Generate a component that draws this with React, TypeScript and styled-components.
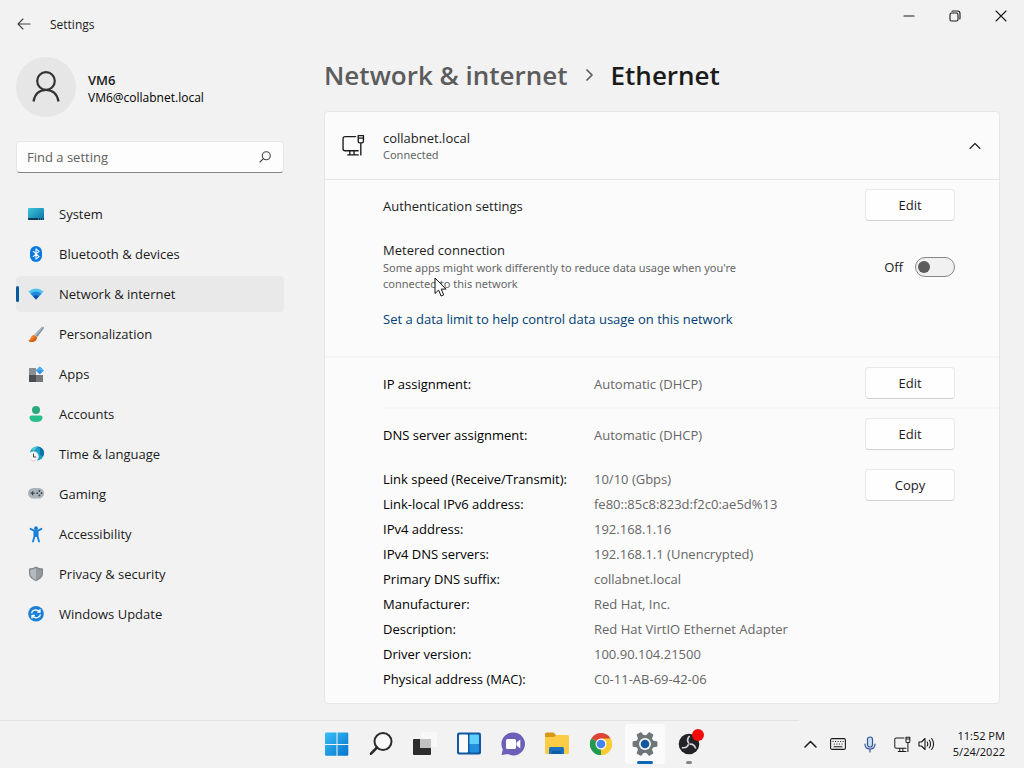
import React from "react";
import styled, { createGlobalStyle } from "styled-components";

const GlobalStyle = createGlobalStyle`
  *, *::before, *::after { box-sizing: border-box; }
  body {
    margin: 0;
    background: #f2f2f2;
    color: #1b1b1b;
    font-family: "Open Sans", "Noto Sans", sans-serif;
    font-size: 13px;
    line-height: 18px;
  }
  button, input { font: inherit; color: inherit; }
  button { padding: 0; border: 0; background: none; }
  svg { display: block; flex: none; }
`;

const Desktop = styled.div`
  display: flex;
  flex-direction: column;
  min-height: 100vh;
`;

const SettingsWindow = styled.div`
  flex: 1;
`;

const TitleBar = styled.header`
  display: flex;
  align-items: flex-start;
  height: 48px;
  padding-left: 4px;
`;

const BackButton = styled.button`
  display: grid;
  place-items: center;
  width: 40px;
  height: 48px;
`;

const WindowTitle = styled.span`
  flex: 1;
  padding-left: 6px;
  font-size: 12px;
  line-height: 50px;
`;

const CaptionButton = styled.button`
  display: grid;
  place-items: center;
  width: 46px;
  height: 32px;
`;

const Layout = styled.div`
  display: grid;
  grid-template-columns: 268px minmax(0, 1fr);
  gap: 40px;
  padding: 0 24px 16px 16px;
`;

const Sidebar = styled.aside`
  padding-top: 9px;
`;

const Profile = styled.div`
  display: flex;
  align-items: center;
  gap: 12px;
  margin-bottom: 24px;
`;

const Avatar = styled.div`
  display: grid;
  place-items: center;
  width: 60px;
  height: 60px;
  border-radius: 50%;
  background: #e6e6e6;
`;

const UserText = styled.div`
  padding-top: 4px;
`;

const UserName = styled.div`
  font-weight: 600;
`;

const UserMail = styled.div`
  font-size: 12px;
  color: #000;
`;

const SearchBox = styled.div`
  display: flex;
  align-items: center;
  height: 32px;
  padding: 0 12px 0 10px;
  border: 1px solid #e6e6e6;
  border-bottom-color: #868686;
  border-radius: 4px;
  background: #fdfdfd;
`;

const SearchInput = styled.input`
  flex: 1;
  min-width: 0;
  padding: 0;
  border: 0;
  outline: 0;
  background: none;
  &::placeholder { color: #606060; opacity: 1; }
`;

const Nav = styled.nav`
  display: flex;
  flex-direction: column;
  gap: 4px;
  margin-top: 23px;
`;

const NavLink = styled.a<{ $active?: boolean }>`
  display: flex;
  align-items: center;
  gap: 15px;
  height: 36px;
  padding-left: 8px;
  border-radius: 4px;
  color: inherit;
  text-decoration: none;
  background: ${(p) => (p.$active ? "#e9e9e9" : "transparent")};
  &::before {
    content: "";
    width: 3px;
    height: 16px;
    margin: 0 -6px 0 -8px;
    border-radius: 2px;
    background: ${(p) => (p.$active ? "#005a9e" : "transparent")};
  }
`;

const Main = styled.main`
  min-width: 0;
  padding-top: 8px;
`;

const Breadcrumb = styled.h1`
  display: flex;
  align-items: center;
  gap: 17px;
  margin: 0 0 17px;
  font-size: 26px;
  font-weight: 600;
  line-height: 38px;
`;

const ParentLink = styled.a`
  color: #5c5c5c;
  text-decoration: none;
`;

const Card = styled.section`
  border: 1px solid #e7e7e7;
  border-radius: 4px;
  background: #fbfbfb;
`;

const CardHeader = styled.button`
  display: flex;
  align-items: center;
  width: 100%;
  height: 68px;
  padding: 0 18px 0 17px;
  border-bottom: 1px solid #e5e5e5;
  text-align: left;
`;

const HeaderText = styled.span`
  display: flex;
  flex: 1;
  flex-direction: column;
  padding-left: 18px;
`;

const Caption = styled.span`
  font-family: "Noto Sans", "Open Sans", sans-serif;
  font-size: 11px;
  line-height: 16px;
  color: #666;
`;

const Group = styled.div`
  padding: 0 44px 0 58px;
`;

const Row = styled.div`
  display: flex;
  align-items: center;
  min-height: 49px;
`;

const MeteredRow = styled.div`
  position: relative;
  display: flex;
  align-items: center;
  justify-content: space-between;
  padding: 12px 0 18px;
`;

const MeteredText = styled.div`
  display: flex;
  flex-direction: column;
  gap: 1px;
  max-width: 400px;
`;

const Grow = styled.span`
  flex: 1;
  padding-top: 2px;
`;

const RowLabel = styled.span`
  width: 211px;
  padding-top: 2px;
  color: #000;
`;

const RowValue = styled.span`
  flex: 1;
  padding-top: 2px;
  color: #666;
`;

const ActionButton = styled.button`
  width: 90px;
  height: 32px;
  border: 1px solid #e8e8e8;
  border-bottom-color: #cfcfcf;
  border-radius: 4px;
  background: #fefefe;
`;

const SwitchLabel = styled.label`
  display: flex;
  align-items: center;
  gap: 12px;
`;

const Switch = styled.input`
  appearance: none;
  display: flex;
  align-items: center;
  width: 40px;
  height: 20px;
  margin: 0;
  padding: 0 2px;
  border: 1px solid #868686;
  border-radius: 10px;
  background: #f1f1f1;
  &::before {
    content: "";
    width: 12px;
    height: 12px;
    border-radius: 50%;
    background: #5c5c5c;
  }
  &:checked { justify-content: flex-end; background: #005a9e; }
  &:checked::before { background: #fff; }
`;

const DataLimitLink = styled.a`
  display: block;
  padding-bottom: 28px;
  color: #003e73;
  text-decoration: none;
`;

const Divider = styled.hr<{ $inset?: boolean }>`
  height: 2px;
  margin: 0 0 0 ${(p) => (p.$inset ? "58px" : "0")};
  border: 0;
  background: #f6f6f6;
`;

const Details = styled.div`
  display: flex;
  align-items: flex-start;
  justify-content: space-between;
  padding: 8px 0 12px;
`;

const DetailTable = styled.table`
  border-collapse: collapse;
  th, td {
    height: 25px;
    padding: 0;
    text-align: left;
    font-weight: 400;
  }
  th { width: 211px; color: #000; }
  td { color: #666; }
`;

const CopySlot = styled.div`
  padding-top: 3px;
`;

const Pointer = styled.svg`
  position: absolute;
  left: 51px;
  top: 48px;
`;

const Taskbar = styled.footer`
  display: grid;
  grid-template-columns: 1fr auto 1fr;
  height: 48px;
  background: linear-gradient(90deg, #e2e2e2 78%, #f2f2f2 78%) top / 100% 1px no-repeat #f2f2f2;
`;

const Apps = styled.div`
  display: flex;
  grid-column: 2;
  align-items: center;
  padding-left: 2px;
`;

const AppButton = styled.button<{ $active?: boolean; $running?: boolean }>`
  position: relative;
  display: grid;
  place-items: center;
  width: 40px;
  height: 40px;
  margin: 0 2px;
  border-radius: 4px;
  background: ${(p) => (p.$active ? "#fbfbfb" : "transparent")};
  &::after {
    content: "";
    position: absolute;
    bottom: 0;
    width: ${(p) => (p.$active ? "16px" : "6px")};
    height: 3px;
    border-radius: 2px;
    background: ${(p) => (p.$active ? "#0f66b4" : p.$running ? "#868686" : "transparent")};
  }
`;

const Tray = styled.div`
  display: flex;
  align-items: center;
  justify-content: flex-end;
  padding-right: 19px;
`;

const TrayButton = styled.button<{ $width: number }>`
  display: grid;
  place-items: center;
  width: ${(p) => p.$width}px;
  height: 40px;
`;

const Clock = styled.button`
  width: 71px;
  font-family: "Noto Sans", "Open Sans", sans-serif;
  font-size: 11px;
  line-height: 16px;
  text-align: right;
  white-space: nowrap;
`;

const line = { fill: "none", stroke: "#1b1b1b", strokeLinecap: "round", strokeLinejoin: "round" } as const;

const EthernetIcon = ({ size }: { size: number }) => (
  <svg width={size} height={size} viewBox="0 0 22 22" {...line} strokeWidth="1.3">
    <path d="M13 2.500H3Q1 2.500 1 4.500V14q0 2 2 2h12.500M7.500 16v4M11.500 16v4M5.500 20h10" />
    <path d="M15.500 1.500h5v5.500q0 1.500-1.500 1.500h-2q-1.500 0-1.500-1.500zM15.500 4h5M18 8.500V20" />
  </svg>
);

const Chevron = ({ d, w, h, width = 1.1, color = "#1b1b1b" }: { d: string; w: number; h: number; width?: number; color?: string }) => (
  <svg width={w} height={h} viewBox={`0 0 ${w} ${h}`} {...line} stroke={color} strokeWidth={width}>
    <path d={d} />
  </svg>
);

const NavSvg = ({ children }: { children: React.ReactNode }) => (
  <svg width="16" height="17" viewBox="0 0 16 17">{children}</svg>
);

const navItems: { label: string; icon: React.ReactNode; active?: boolean }[] = [
  {
    label: "System",
    icon: (
      <NavSvg>
        <defs><linearGradient id="sys" x1="0" y1="0" x2="1" y2="1"><stop stopColor="#3cc9d8" /><stop offset="1" stopColor="#0b6fa8" /></linearGradient></defs>
        <rect y="2" width="16" height="12" rx="1" fill="url(#sys)" />
        <path d="M0 12h16v1q0 1-1 1H1q-1 0-1-1z" fill="#0a3c5c" />
        <path d="M10 13h1M12 13h1M14 13h1" stroke="#6fc8ee" strokeWidth=".8" />
      </NavSvg>
    ),
  },
  {
    label: "Bluetooth & devices",
    icon: (
      <NavSvg>
        <rect x="2" y="0" width="12" height="16" rx="6" fill="#0a78e0" />
        <path d="M5 5.200l6 5.400L8 13.200V2.800l3 2.600-6 5.400" fill="none" stroke="#fff" strokeWidth="1.100" strokeLinejoin="round" />
      </NavSvg>
    ),
  },
  {
    label: "Network & internet",
    active: true,
    icon: (
      <NavSvg>
        <path d="M.4 5.600Q8-.8 15.600 5.600L8 13.600z" fill="#4cc3f1" />
        <path d="M2.600 7.800Q8 3.200 13.400 7.800L8 13.600z" fill="#1e88dc" />
        <path d="M5.200 10.600Q8 8 10.800 10.600L8 13.600z" fill="#0c4fa3" />
      </NavSvg>
    ),
  },
  {
    label: "Personalization",
    icon: (
      <NavSvg>
        <path d="M15.600 1q.6.8 0 1.800L9.400 11 6.600 8.400 13.600 1.200q1-.8 2-.2z" fill="#7d929e" />
        <path d="M13.600 1.200q1-.8 2-.2L8 9.700 6.600 8.400z" fill="#a9bcc6" />
        <path d="M6.400 8.800L9 11.200Q8.600 15.600 4 16 1.600 16.100.4 14.800 2 14.200 2.600 12q.8-2.800 3.800-3.200z" fill="#ec7f26" />
        <path d="M4 16Q1.600 16.100.4 14.800 4.600 14.600 7.600 10l1.400 1.200Q8.600 15.600 4 16z" fill="#d4601a" />
      </NavSvg>
    ),
  },
  {
    label: "Apps",
    icon: (
      <NavSvg>
        <rect x="1" y="2" width="7" height="7" fill="#8b8f92" />
        <rect x="1" y="9" width="7" height="7" fill="#4c4f52" />
        <rect x="8" y="9" width="7" height="7" fill="#73777a" />
        <path d="M11.800.6l4 4-4 4-4-4z" fill="#2f94e6" />
        <path d="M11.800.6l4 4h-8z" fill="#52b0f2" />
      </NavSvg>
    ),
  },
  {
    label: "Accounts",
    icon: (
      <NavSvg>
        <circle cx="8" cy="4" r="4" fill="#2aa87e" />
        <path d="M4 9.400h8q2.600 0 2.600 2.400-.6 4.200-6.600 4.200t-6.600-4.200q0-2.400 2.600-2.400z" fill="#25bf8d" />
      </NavSvg>
    ),
  },
  {
    label: "Time & language",
    icon: (
      <NavSvg>
        <circle cx="9" cy="7.500" r="7" fill="#1e9fc0" />
        <path d="M9 .5q4 1.500 3 5t3 5q2-4 0-7T9 .5z" fill="#0c6fae" />
        <path d="M4 3q2-2.400 5-2.500-1 3-4 4.500z" fill="#58d0d3" />
        <circle cx="5.500" cy="10.500" r="5.200" fill="#f4f1f2" />
        <path d="M5.500 7.600V11h2.600" stroke="#444" strokeWidth="1" fill="none" />
        <path d="M1.800 13q3.600 3 7.400 0-1.400 2.700-3.700 2.700T1.800 13z" fill="#ecc9cb" />
      </NavSvg>
    ),
  },
  {
    label: "Gaming",
    icon: (
      <NavSvg>
        <rect y="2" width="16" height="10.500" rx="5.200" fill="#aab3ba" />
        <path d="M2.600 7.200h4M4.600 5.200v4" stroke="#3f474e" strokeWidth="1.200" />
        <g fill="#3f474e"><circle cx="11.400" cy="5" r=".9" /><circle cx="11.400" cy="9.400" r=".9" /><circle cx="9.300" cy="7.200" r=".9" /><circle cx="13.500" cy="7.200" r=".9" /></g>
      </NavSvg>
    ),
  },
  {
    label: "Accessibility",
    icon: (
      <NavSvg>
        <circle cx="8" cy="2.200" r="1.900" fill="#1478d0" />
        <path d="M2.600 2.800L6 4.600h4l3.400-1.800M8 5v5M6.400 5.500v5L5 15.500M9.600 5.500v5l1.400 5" fill="none" stroke="#1b82da" strokeWidth="1.900" strokeLinecap="round" strokeLinejoin="round" />
      </NavSvg>
    ),
  },
  {
    label: "Privacy & security",
    icon: (
      <NavSvg>
        <path d="M8 .6q3 2 7 2v4.800Q15 12 8 15.200 1 12 1 7.400V2.600q4 0 7-2z" fill="#7f8589" />
        <path d="M8 2q2.400 1.600 5.800 1.700v3.700Q13.600 11.200 8 14z" fill="#94999d" />
        <path d="M8 2Q5.600 3.600 2.200 3.700v3.700Q2.400 11.200 8 14z" fill="#b5babd" />
      </NavSvg>
    ),
  },
  {
    label: "Windows Update",
    icon: (
      <NavSvg>
        <circle cx="8" cy="7.800" r="7.800" fill="#1a80d6" />
        <path d="M3.600 7.200Q4.200 4 8 3.800q2.400.2 3.800 2M12 3.200v2.900H9.200M12.400 8.400Q11.800 11.600 8 11.800q-2.400-.2-3.800-2M4 12.400V9.500h2.800" fill="none" stroke="#fff" strokeWidth="1.300" />
      </NavSvg>
    ),
  },
];

const details: [string, string][] = [
  ["Link speed (Receive/Transmit):", "10/10 (Gbps)"],
  ["Link-local IPv6 address:", "fe80::85c8:823d:f2c0:ae5d%13"],
  ["IPv4 address:", "192.168.1.16"],
  ["IPv4 DNS servers:", "192.168.1.1 (Unencrypted)"],
  ["Primary DNS suffix:", "collabnet.local"],
  ["Manufacturer:", "Red Hat, Inc."],
  ["Description:", "Red Hat VirtIO Ethernet Adapter"],
  ["Driver version:", "100.90.104.21500"],
  ["Physical address (MAC):", "C0-11-AB-69-42-06"],
];

const AppSvg = ({ children }: { children: React.ReactNode }) => (
  <svg width="26" height="26" viewBox="0 0 26 26">{children}</svg>
);

const apps: { label: string; icon: React.ReactNode; active?: boolean; running?: boolean }[] = [
  {
    label: "Start",
    icon: (
      <AppSvg>
        <defs><linearGradient id="win" x1="0" y1="0" x2="1" y2="1"><stop stopColor="#38c0f4" /><stop offset="1" stopColor="#0474d0" /></linearGradient></defs>
        <path d="M2 1.500h10.500V13H1V2.500q0-1 1-1zM13.500 1.500h9.800q1 0 1 1V13H13.500zM1 14h11.500v10.800H2q-1 0-1-1zM13.500 14h10.800v9.800q0 1-1 1h-9.800z" fill="url(#win)" />
      </AppSvg>
    ),
  },
  {
    label: "Search",
    icon: (
      <AppSvg>
        <circle cx="15" cy="10.500" r="8.500" fill="#fafafa" stroke="#2b2b2b" strokeWidth="2" />
        <path d="M9 16.500L3 22.700" stroke="#2b2b2b" strokeWidth="2.600" strokeLinecap="round" />
      </AppSvg>
    ),
  },
  {
    label: "Task view",
    icon: (
      <AppSvg>
        <rect x="9" y="1" width="16" height="15" fill="#f8f8f8" />
        <rect x="1" y="8" width="18" height="16" rx="1" fill="#2d2d2d" />
        <rect x="8" y="8" width="11" height="9" fill="#c2c2c2" />
      </AppSvg>
    ),
  },
  {
    label: "Widgets",
    icon: (
      <AppSvg>
        <rect x="1" y="1.500" width="24" height="22" rx="2" fill="#14599f" />
        <rect x="3" y="3.500" width="9" height="18" rx="1" fill="#fbfbfb" />
        <rect x="13.500" y="3.500" width="9.500" height="10" rx="1" fill="#5fd0fb" />
        <rect x="13.500" y="13.500" width="9.500" height="8" rx="1" fill="#1f8fe0" />
      </AppSvg>
    ),
  },
  {
    label: "Chat",
    icon: (
      <AppSvg>
        <path d="M13 1.500a11.500 11.500 0 1 1-5 21.600L1.500 24l1.300-5.500A11.500 11.500 0 0 1 13 1.500z" fill="#6a60b8" />
        <rect x="6" y="8" width="10" height="10" rx="1.500" fill="#fff" />
        <path d="M16.500 11.500l3.800-3v9l-3.800-3z" fill="#fff" />
      </AppSvg>
    ),
  },
  {
    label: "File Explorer",
    icon: (
      <AppSvg>
        <path d="M1 3q0-1.500 1.500-1.500h7L12 4v3H1z" fill="#d99a1c" />
        <path d="M1 6h9l2-2h11.500Q25 4 25 5.500v16q0 1.500-1.500 1.500h-21Q1 23 1 21.500z" fill="#fbcc45" />
        <path d="M5 23v-5.500q0-1.500 1.500-1.500h12q1.500 0 1.500 1.500V23z" fill="#1a6fc0" />
        <path d="M8 23v-3h9v3z" fill="#0f5aa5" />
      </AppSvg>
    ),
  },
  {
    label: "Google Chrome",
    icon: (
      <AppSvg>
        <path d="M13 13L3.470 7.500A11 11 0 0 1 22.530 7.500z" fill="#dc4437" />
        <path d="M13 13l9.530-5.500A11 11 0 0 1 13 24z" fill="#fccb31" />
        <path d="M13 13v11A11 11 0 0 1 3.470 7.500z" fill="#23994d" />
        <path d="M13 7.500h9.530A11 11 0 0 1 13 24l4.800-8.200z" fill="#fccb31" />
        <path d="M3.470 7.500l4.800 8.300L13 24A11 11 0 0 1 3.470 7.500z" fill="#23994d" />
        <circle cx="13" cy="13" r="5.500" fill="#fff" />
        <circle cx="13" cy="13" r="4.300" fill="#4584ee" />
      </AppSvg>
    ),
  },
  {
    label: "Settings",
    active: true,
    icon: (
      <AppSvg>
        <g fill="#6f7679">
          {[30, 90, 150, 210, 270, 330].map((a) => (
            <path key={a} d="M9.400 6L10.300 1.200q.1-.6.800-.6h3.800q.7 0 .8.600L16.600 6z" transform={`rotate(${a} 13 13)`} />
          ))}
          <circle cx="13" cy="13" r="9" />
        </g>
        <circle cx="13" cy="13" r="6" fill="#f4f6f8" />
        <circle cx="13" cy="13" r="4.300" fill="#11589f" />
      </AppSvg>
    ),
  },
  {
    label: "OBS Studio",
    running: true,
    icon: (
      <svg width="30" height="30" viewBox="0 0 30 30">
        <circle cx="15" cy="15" r="10.300" fill="#232327" />
        <g fill="none" stroke="#d4d4d6" strokeWidth="1.700">
          {[0, 120, 240].map((a) => (
            <path key={a} d="M15 14.500Q12 11 15.500 7" transform={`rotate(${a} 15 15)`} />
          ))}
        </g>
        <circle cx="24" cy="6" r="6" fill="#f50a0a" />
      </svg>
    ),
  },
];

export default function App() {
  return (
    <Desktop>
      <GlobalStyle />
      <SettingsWindow>
        <TitleBar>
          <BackButton aria-label="Back">
            <Chevron w={14} h={12} d="M13 6H1M6 1L1 6l5 5" color="#444" />
          </BackButton>
          <WindowTitle>Settings</WindowTitle>
          <CaptionButton aria-label="Minimize"><Chevron w={12} h={2} d="M1 1h10" /></CaptionButton>
          <CaptionButton aria-label="Restore">
            <svg width="12" height="12" viewBox="0 0 12 12" {...line} strokeWidth="1.100">
              <rect x="1" y="3" width="8" height="8" rx="1.500" />
              <path d="M3 1.200Q3.500 1 4 1h4.500Q11 1 11 3.500V8q0 .5-.2 1" />
            </svg>
          </CaptionButton>
          <CaptionButton aria-label="Close"><Chevron w={12} h={12} d="M1 1l10 10M11 1L1 11" /></CaptionButton>
        </TitleBar>
        <Layout>
          <Sidebar>
            <Profile>
              <Avatar>
                <svg width="28" height="32" viewBox="0 0 28 32" {...line} stroke="#333" strokeWidth="2.200" strokeLinecap="butt">
                  <circle cx="14" cy="10" r="8.800" />
                  <path d="M1.500 30.500Q3.500 19 14 19t12.500 11.500" />
                </svg>
              </Avatar>
              <UserText>
                <UserName>VM6</UserName>
                <UserMail>VM6@collabnet.local</UserMail>
              </UserText>
            </Profile>
            <SearchBox>
              <SearchInput type="search" placeholder="Find a setting" aria-label="Find a setting" />
              <svg width="12" height="12" viewBox="0 0 12 12" {...line} stroke="#444" strokeWidth="1.100">
                <circle cx="7.300" cy="4.700" r="4" />
                <path d="M4.400 7.600L1 11" />
              </svg>
            </SearchBox>
            <Nav>
              {navItems.map((item) => (
                <NavLink key={item.label} href="#" $active={item.active} aria-current={item.active ? "page" : undefined}>
                  {item.icon}
                  {item.label}
                </NavLink>
              ))}
            </Nav>
          </Sidebar>
          <Main>
            <Breadcrumb>
              <ParentLink href="#">Network &amp; internet</ParentLink>
              <Chevron w={9} h={12} d="M2 1l5 5-5 5" width={1.7} color="#5c5c5c" />
              <span>Ethernet</span>
            </Breadcrumb>
            <Card>
              <CardHeader aria-expanded="true">
                <EthernetIcon size={23} />
                <HeaderText>
                  <span>collabnet.local</span>
                  <Caption>Connected</Caption>
                </HeaderText>
                <Chevron w={12} h={8} d="M1 6.500l5-5 5 5" />
              </CardHeader>
              <Group>
                <Row>
                  <Grow>Authentication settings</Grow>
                  <ActionButton>Edit</ActionButton>
                </Row>
                <MeteredRow>
                  <MeteredText>
                    <span id="metered">Metered connection</span>
                    <Caption>Some apps might work differently to reduce data usage when you're connected to this network</Caption>
                  </MeteredText>
                  <SwitchLabel>
                    Off
                    <Switch type="checkbox" role="switch" aria-describedby="metered" />
                  </SwitchLabel>
                  <Pointer width="14" height="21" viewBox="0 0 14 21">
                    <path d="M1 1v15.500l3.600-3.400 2.500 5.900 2.600-1.100-2.500-5.800H12z" fill="#fff" stroke="#111" strokeWidth="1" />
                  </Pointer>
                </MeteredRow>
                <DataLimitLink href="#">Set a data limit to help control data usage on this network</DataLimitLink>
              </Group>
              <Divider />
              <Group>
                <Row>
                  <RowLabel>IP assignment:</RowLabel>
                  <RowValue>Automatic (DHCP)</RowValue>
                  <ActionButton>Edit</ActionButton>
                </Row>
              </Group>
              <Divider $inset />
              <Group>
                <Row>
                  <RowLabel>DNS server assignment:</RowLabel>
                  <RowValue>Automatic (DHCP)</RowValue>
                  <ActionButton>Edit</ActionButton>
                </Row>
                <Details>
                  <DetailTable>
                    <tbody>
                      {details.map(([name, value]) => (
                        <tr key={name}>
                          <th scope="row">{name}</th>
                          <td>{value}</td>
                        </tr>
                      ))}
                    </tbody>
                  </DetailTable>
                  <CopySlot><ActionButton>Copy</ActionButton></CopySlot>
                </Details>
              </Group>
            </Card>
          </Main>
        </Layout>
      </SettingsWindow>
      <Taskbar>
        <Apps>
          {apps.map((app) => (
            <AppButton key={app.label} aria-label={app.label} $active={app.active} $running={app.running}>
              {app.icon}
            </AppButton>
          ))}
        </Apps>
        <Tray>
          <TrayButton $width={24} aria-label="Show hidden icons"><Chevron w={13} h={8} d="M1 7l5.500-5.500L12 7" width={1.5} /></TrayButton>
          <TrayButton $width={32} aria-label="Touch keyboard">
            <svg width="16" height="12" viewBox="0 0 16 12" {...line} strokeWidth="1.100">
              <rect x=".6" y=".6" width="14.800" height="10.800" rx="1.500" />
              <path d="M3 3.500h.2M5.500 3.500h.2M8 3.500h.2M10.500 3.500h.2M13 3.500h.2M4.200 6h.2M6.800 6h.2M9.400 6h.2M12 6h.2M4 8.700h8" />
            </svg>
          </TrayButton>
          <TrayButton $width={32} aria-label="Microphone">
            <svg width="12" height="17" viewBox="0 0 12 17" {...line} stroke="#2f5597" strokeWidth="1.200">
              <rect x="3.500" y="1" width="5" height="10" rx="2.500" fill="#cfe0f5" />
              <path d="M1 8q0 5 5 5t5-5M6 13v3" />
            </svg>
          </TrayButton>
          <TrayButton $width={32} aria-label="Network"><EthernetIcon size={17} /></TrayButton>
          <TrayButton $width={16} aria-label="Volume">
            <svg width="17" height="14" viewBox="0 0 17 14" {...line} strokeWidth="1.100">
              <path d="M1 5v4h2.500L7 12.500v-11L3.500 5z" />
              <path d="M9.200 5q1.200 2 0 4M11.400 3.200q2.400 3.800 0 7.600M13.700 1.500q3.800 5.500 0 11" />
            </svg>
          </TrayButton>
          <Clock>11:52 PM<br />5/24/2022</Clock>
        </Tray>
      </Taskbar>
    </Desktop>
  );
}
